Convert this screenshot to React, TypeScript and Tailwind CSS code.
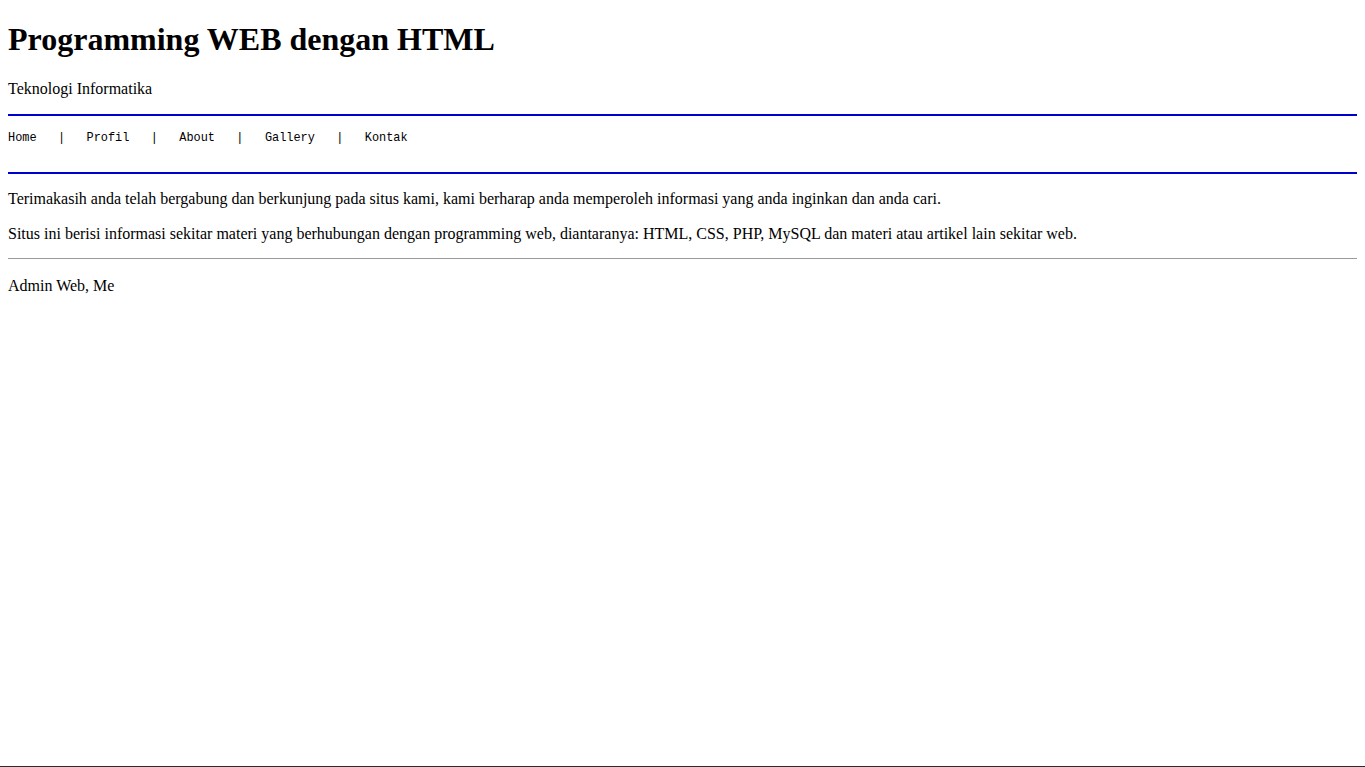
import React from "react";

const navItems = ["Home", "Profil", "About", "Gallery", "Kontak"];

const App: React.FC = () => {
  const navText = navItems.join("   |   ");

  return (
    <div className="flex h-screen flex-col bg-white font-['Liberation_Serif','Times_New_Roman',serif] text-black">
      <div className="px-2 pt-[21px]">
        <h1 className="text-[32px] leading-[37px] font-bold">Programming WEB dengan HTML</h1>
        <p className="mt-[22px] text-[16px] leading-[18px]">Teknologi Informatika</p>

        {/* menu */}
        <div className="mt-4 border-y-2 border-[#0000cd] pt-[15px] pb-[26px]">
          <p className="whitespace-pre font-['Liberation_Mono','Courier_New',monospace] text-[11.9px] leading-[15px]">
            {navText}
          </p>
        </div>

        <p className="mt-4 text-[16px] leading-[18px]">
          Terimakasih anda telah bergabung dan berkunjung pada situs kami, kami berharap anda memperoleh informasi yang anda inginkan dan anda cari.
        </p>
        <p className="mt-[17px] text-[16px] leading-[18px]">
          Situs ini berisi informasi sekitar materi yang berhubungan dengan programming web, diantaranya: HTML, CSS, PHP, MySQL dan materi atau artikel lain sekitar web.
        </p>

        <hr className="mt-[15px] border-t border-[#9a9a9a]" />

        <p className="mt-[18px] text-[16px] leading-[18px]">Admin Web, Me</p>
      </div>

      <div className="mt-auto h-px w-full bg-[#2b2b2b]" />
    </div>
  );
};

export default App;
